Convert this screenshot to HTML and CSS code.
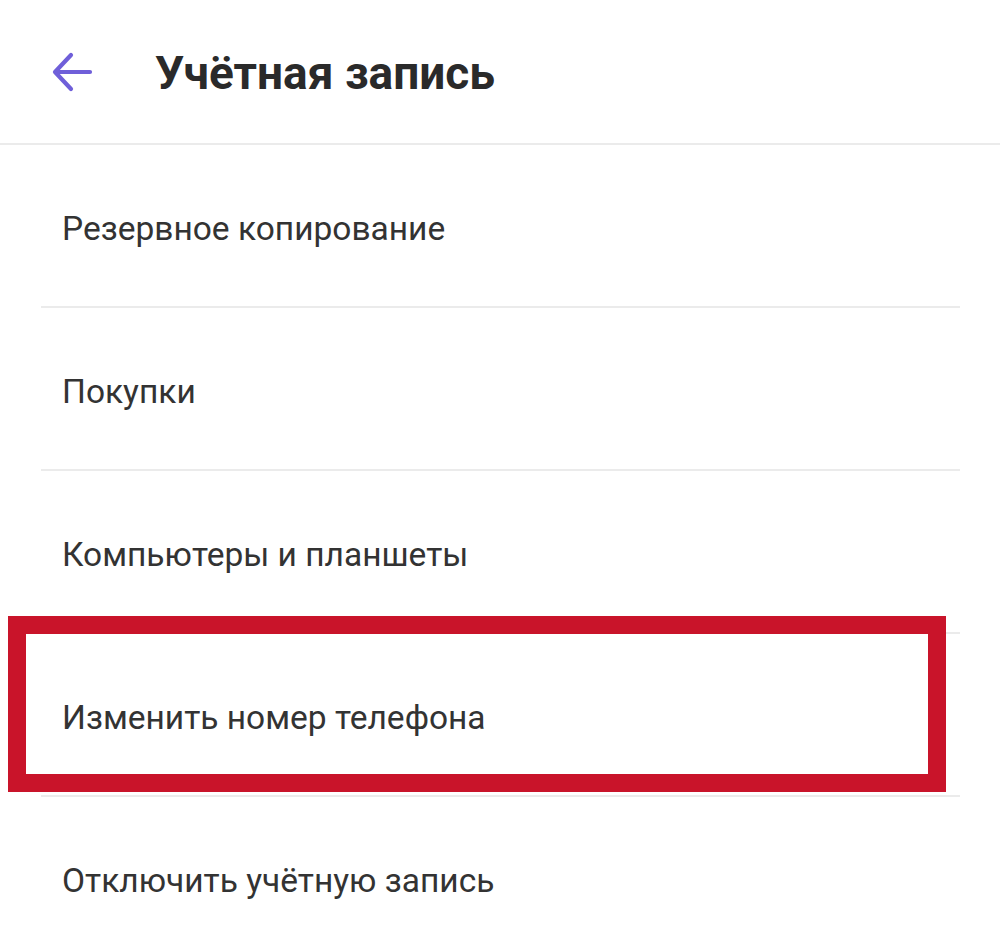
FILE: index.html
```html
<!DOCTYPE html>
<html lang="ru">
<head>
<meta charset="utf-8">
<title>Учётная запись</title>
<link rel="stylesheet" href="styles.css">
</head>
<body>
<header class="topbar">
  <svg class="back" width="44" height="44" viewBox="0 0 44 44" aria-hidden="true">
    <path d="M40 22H6M21 5L5 22l16 17" fill="none" stroke="#6f5fd9" stroke-width="4.2" stroke-linecap="round" stroke-linejoin="round"/>
  </svg>
  <h1 class="title">Учётная запись</h1>
</header>
<main class="list">
  <div class="row"><span class="label">Резервное копирование</span></div>
  <div class="row"><span class="label">Покупки</span></div>
  <div class="row"><span class="label">Компьютеры и планшеты</span></div>
  <div class="row row-marked"><span class="label">Изменить номер телефона</span><span class="mark"></span></div>
  <div class="row row-last"><span class="label">Отключить учётную запись</span></div>
</main>
</body>
</html>
```
FILE: styles.css
```css
html, body {
  margin: 0;
  padding: 0;
  background: #ffffff;
}
body {
  width: 1000px;
  height: 952px;
  overflow: hidden;
  font-family: Roboto, "Noto Sans", sans-serif;
}
.topbar {
  height: 143px;
  border-bottom: 2px solid #ebebeb;
  display: flex;
  align-items: center;
  padding-left: 50px;
  box-sizing: content-box;
}
.back {
  display: block;
  margin-top: 1px;
}
.title {
  margin: 0 0 0 61px;
  font-size: 46px;
  font-weight: 700;
  color: #2a2a2a;
  margin-top: 2px;
}
.list {
  margin: 0 40px 0 41px;
}
.row {
  height: 161px;
  border-bottom: 2px solid #ebebeb;
  display: flex;
  align-items: center;
  padding-left: 21px;
  position: relative;
}
.row-last {
  border-bottom: none;
}
.label {
  font-size: 33.5px;
  color: #333333;
  margin-top: 6px;
}
.mark {
  position: absolute;
  left: -33px;
  top: -18px;
  width: 938px;
  height: 176px;
  box-sizing: border-box;
  border: 18px solid #c9142a;
}
```
